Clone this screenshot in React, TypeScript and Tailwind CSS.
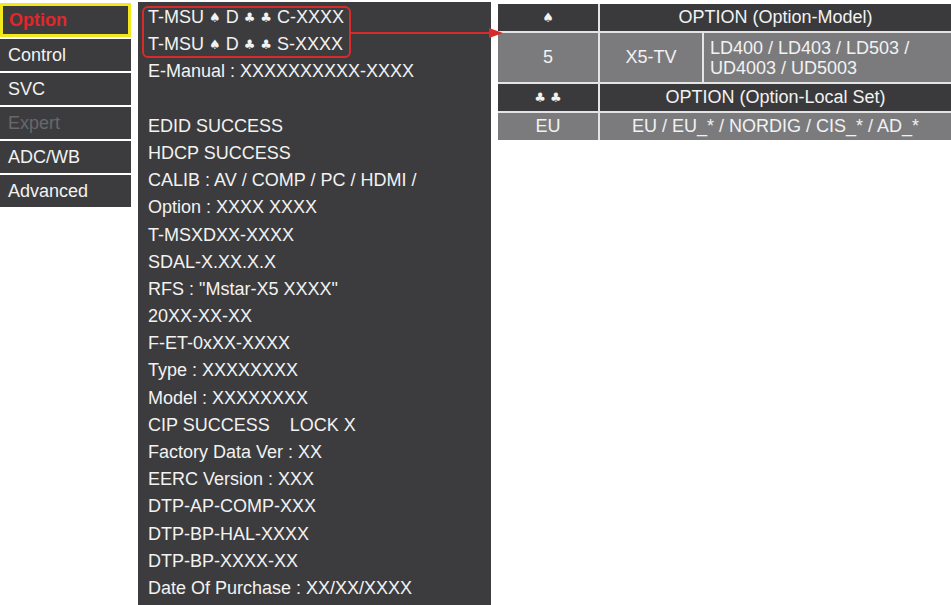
const menuItems = [
  { label: 'Control', muted: false },
  { label: 'SVC', muted: false },
  { label: 'Expert', muted: true },
  { label: 'ADC/WB', muted: false },
  { label: 'Advanced', muted: false },
]

const Sym = ({ children }: { children: string }) => (
  <span className="text-[13px] font-['DejaVu_Sans',sans-serif] align-[1px]">{children}</span>
)

const infoLines: (string | JSX.Element)[] = [
  <>T-MSU <Sym>♠</Sym> D <Sym>♣</Sym> <Sym>♣</Sym> C-XXXX</>,
  <>T-MSU <Sym>♠</Sym> D <Sym>♣</Sym> <Sym>♣</Sym> S-XXXX</>,
  'E-Manual : XXXXXXXXXX-XXXX',
  '',
  'EDID SUCCESS',
  'HDCP SUCCESS',
  'CALIB : AV / COMP / PC / HDMI /',
  'Option : XXXX XXXX',
  'T-MSXDXX-XXXX',
  'SDAL-X.XX.X.X',
  'RFS : "Mstar-X5 XXXX"',
  '20XX-XX-XX',
  'F-ET-0xXX-XXXX',
  'Type : XXXXXXXX',
  'Model : XXXXXXXX',
  'CIP SUCCESS\u00a0\u00a0\u00a0\u00a0LOCK X',
  'Factory Data Ver : XX',
  'EERC Version : XXX',
  'DTP-AP-COMP-XXX',
  'DTP-BP-HAL-XXXX',
  'DTP-BP-XXXX-XX',
  'Date Of Purchase : XX/XX/XXXX',
]

const Menu = () => (
  <div className="w-[131px] shrink-0 pt-[3px] flex flex-col gap-[2px]">
    <div className="h-[34px] bg-[#3c3c3e] border-[3px] border-[#f2e81c] flex items-center pl-[6px] text-[18px] font-bold text-[#e3262b]">
      Option
    </div>
    {menuItems.map((item) => (
      <div
        key={item.label}
        className={`h-[32px] bg-[#3c3c3e] flex items-center pl-[8px] text-[18px] ${
          item.muted ? 'text-[#68686a]' : 'text-[#f2f2f2]'
        }`}
      >
        {item.label}
      </div>
    ))}
  </div>
)

const InfoPanel = () => (
  <div className="w-[353px] shrink-0 ml-[7px] mt-[2px] bg-[#3c3c3e] pt-[2px] pl-[10px] text-[18px] text-[#f2f2f2]">
    {infoLines.map((line, i) => (
      <div key={i} className="h-[27.2px] leading-[27.2px] whitespace-nowrap">
        {line}
      </div>
    ))}
  </div>
)

const OptionTable = () => (
  <div className="ml-[7px] mt-[4px] w-[453px] shrink-0 self-start grid grid-cols-[100px_102px_1fr] grid-rows-[27px_49px_27px_27px] gap-[2px] bg-[#e4e4e4] text-[18px] text-[#f2f2f2]">
    <div className="bg-[#3a3a3c] flex items-center justify-center">
      <span className="text-[13px] font-['DejaVu_Sans',sans-serif]">♠</span>
    </div>
    <div className="col-span-2 bg-[#3a3a3c] flex items-center justify-center">OPTION (Option-Model)</div>
    <div className="bg-[#7b7b7e] flex items-center justify-center">5</div>
    <div className="bg-[#7b7b7e] flex items-center justify-center">X5-TV</div>
    <div className="bg-[#7b7b7e] flex flex-col justify-center pl-[6px] leading-[20px]">
      <span>LD400 / LD403 / LD503 /</span>
      <span>UD4003 / UD5003</span>
    </div>
    <div className="bg-[#3a3a3c] flex items-center justify-center">
      <span className="text-[13px] font-['DejaVu_Sans',sans-serif]">♣ ♣</span>
    </div>
    <div className="col-span-2 bg-[#3a3a3c] flex items-center justify-center">OPTION (Option-Local Set)</div>
    <div className="bg-[#7b7b7e] flex items-center justify-center">EU</div>
    <div className="col-span-2 bg-[#7b7b7e] flex items-center justify-center">EU / EU_* / NORDIG / CIS_* / AD_*</div>
  </div>
)

export default function App() {
  return (
    <div className="relative w-[951px] h-[605px] overflow-hidden bg-white flex font-['Liberation_Sans',Arial,sans-serif]">
      <Menu />
      <InfoPanel />
      <OptionTable />

      {/* annotation: red box + arrow */}
      <div className="absolute left-[142px] top-[6px] w-[209px] h-[52px] border-2 border-[#d82b2b] rounded-[6px]" />
      <svg className="absolute left-[350px] top-[26px]" width="156" height="14" viewBox="0 0 156 14">
        <line x1="0" y1="7" x2="142" y2="7" stroke="#d82b2b" strokeWidth="2" />
        <polygon points="139,2 153,7 139,12" fill="#d82b2b" />
      </svg>
    </div>
  )
}
